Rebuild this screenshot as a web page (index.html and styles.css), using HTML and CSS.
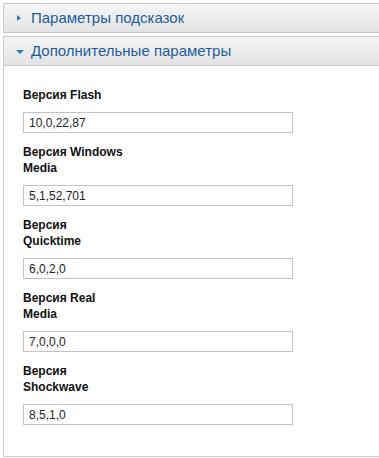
FILE: index.html
```html
<!DOCTYPE html>
<html lang="ru">
<head>
<meta charset="utf-8">
<title>Параметры</title>
<link rel="stylesheet" href="styles.css">
</head>
<body>
<div class="accordion">
  <div class="acc-header">
    <span class="arrow arrow-right"></span>
    <span class="acc-title">Параметры подсказок</span>
  </div>
  <div class="acc-header">
    <span class="arrow arrow-down"></span>
    <span class="acc-title">Дополнительные параметры</span>
  </div>
  <div class="acc-panel">
    <div class="field">
      <label class="field-label">Версия Flash</label>
      <input class="field-input" type="text" value="10,0,22,87">
    </div>
    <div class="field">
      <label class="field-label">Версия Windows Media</label>
      <input class="field-input" type="text" value="5,1,52,701">
    </div>
    <div class="field">
      <label class="field-label">Версия Quicktime</label>
      <input class="field-input" type="text" value="6,0,2,0">
    </div>
    <div class="field">
      <label class="field-label">Версия Real Media</label>
      <input class="field-input" type="text" value="7,0,0,0">
    </div>
    <div class="field">
      <label class="field-label">Версия Shockwave</label>
      <input class="field-input" type="text" value="8,5,1,0">
    </div>
  </div>
</div>
</body>
</html>
```
FILE: styles.css
```css
html, body {
  margin: 0;
  padding: 0;
  background: #ffffff;
}

body {
  padding: 3px 0 0 3px;
  font-family: "Liberation Sans", Arial, sans-serif;
}

.accordion {
  display: flex;
  flex-direction: column;
}

.acc-header {
  box-sizing: border-box;
  height: 30px;
  border: 1px solid #c9c9c9;
  border-right: 0;
  background: linear-gradient(to bottom, #f5f5f5 0%, #e4e4e4 100%);
  display: flex;
  align-items: center;
  padding-left: 12px;
  margin-bottom: 3px;
}

.acc-header:nth-child(2) {
  margin-bottom: 0;
}

.acc-title {
  font-size: 15px;
  color: #1c5d9c;
  line-height: 18px;
}

.arrow {
  width: 0;
  height: 0;
  flex: none;
}

.arrow-right {
  margin-left: 1px;
  margin-right: 10px;
  border-top: 3px solid transparent;
  border-bottom: 3px solid transparent;
  border-left: 4px solid #2b7fc2;
}

.arrow-down {
  margin-top: 1px;
  margin-right: 7px;
  border-left: 4px solid transparent;
  border-right: 4px solid transparent;
  border-top: 4px solid #2b7fc2;
}

.acc-panel {
  border-left: 1px solid #cccccc;
  border-bottom: 1px solid #cccccc;
  padding: 21px 0 20px 19px;
}

.field {
  display: flex;
  flex-direction: column;
  align-items: flex-start;
  margin-bottom: 11px;
}

.field-label {
  width: 100px;
  font-size: 12px;
  line-height: 16px;
  font-weight: bold;
  color: #111111;
  margin-bottom: 9px;
}

.field-input {
  box-sizing: border-box;
  width: 270px;
  height: 21px;
  margin: 0;
  border: 1px solid #c3c3c3;
  padding: 0 5px;
  font-family: "Liberation Sans", Arial, sans-serif;
  font-size: 12px;
  color: #222222;
  background: #ffffff;
  outline: none;
}
```
